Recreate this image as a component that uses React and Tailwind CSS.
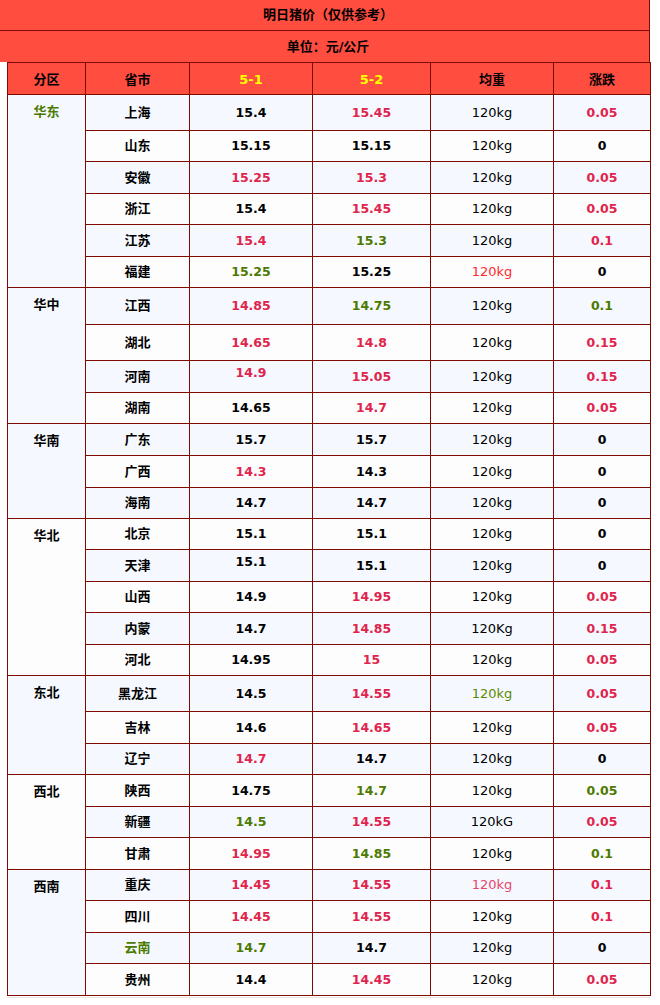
const K = 'text-black'
const R = 'text-[#e0244c]'
const G = 'text-[#4c7a00]'

const groups = [
  {
    region: '华东',
    regionColor: G,
    rows: [
      ['上海', K, '15.4', K, '15.45', R, '120kg', K, '0.05', R, 'h-[36px]'],
      ['山东', K, '15.15', K, '15.15', K, '120kg', K, '0', K, 'h-[31px]'],
      ['安徽', K, '15.25', R, '15.3', R, '120kg', K, '0.05', R, 'h-[32px]'],
      ['浙江', K, '15.4', K, '15.45', R, '120kg', K, '0.05', R, 'h-[31px]'],
      ['江苏', K, '15.4', R, '15.3', G, '120kg', K, '0.1', R, 'h-[32px]'],
      ['福建', K, '15.25', G, '15.25', K, '120kg', 'text-[#ff2a2a]', '0', K, 'h-[31px]'],
    ],
  },
  {
    region: '华中',
    regionColor: K,
    rows: [
      ['江西', K, '14.85', R, '14.75', G, '120kg', K, '0.1', G, 'h-[37px]'],
      ['湖北', K, '14.65', R, '14.8', R, '120kg', K, '0.15', R, 'h-[36px]'],
      ['河南', K, '14.9', R, '15.05', R, '120kg', K, '0.15', R, 'h-[32px]', true],
      ['湖南', K, '14.65', K, '14.7', R, '120kg', K, '0.05', R, 'h-[31px]'],
    ],
  },
  {
    region: '华南',
    regionColor: K,
    rows: [
      ['广东', K, '15.7', K, '15.7', K, '120kg', K, '0', K, 'h-[32px]'],
      ['广西', K, '14.3', R, '14.3', K, '120kg', K, '0', K, 'h-[32px]'],
      ['海南', K, '14.7', K, '14.7', K, '120kg', K, '0', K, 'h-[31px]'],
    ],
  },
  {
    region: '华北',
    regionColor: K,
    rows: [
      ['北京', K, '15.1', K, '15.1', K, '120kg', K, '0', K, 'h-[31px]'],
      ['天津', K, '15.1', K, '15.1', K, '120kg', K, '0', K, 'h-[32px]', true],
      ['山西', K, '14.9', K, '14.95', R, '120kg', K, '0.05', R, 'h-[31px]'],
      ['内蒙', K, '14.7', K, '14.85', R, '120Kg', K, '0.15', R, 'h-[32px]'],
      ['河北', K, '14.95', K, '15', R, '120kg', K, '0.05', R, 'h-[31px]'],
    ],
  },
  {
    region: '东北',
    regionColor: K,
    rows: [
      ['黑龙江', K, '14.5', K, '14.55', R, '120kg', 'text-[#5a8a00]', '0.05', R, 'h-[36px]'],
      ['吉林', K, '14.6', K, '14.65', R, '120kg', K, '0.05', R, 'h-[32px]'],
      ['辽宁', K, '14.7', R, '14.7', K, '120kg', K, '0', K, 'h-[31px]'],
    ],
  },
  {
    region: '西北',
    regionColor: K,
    rows: [
      ['陕西', K, '14.75', K, '14.7', G, '120kg', K, '0.05', G, 'h-[32px]'],
      ['新疆', K, '14.5', G, '14.55', R, '120kG', K, '0.05', R, 'h-[31px]'],
      ['甘肃', K, '14.95', R, '14.85', G, '120kg', K, '0.1', G, 'h-[32px]'],
    ],
  },
  {
    region: '西南',
    regionColor: K,
    rows: [
      ['重庆', K, '14.45', R, '14.55', R, '120kg', 'text-[#e8466a]', '0.1', R, 'h-[31px]'],
      ['四川', K, '14.45', R, '14.55', R, '120kg', K, '0.1', R, 'h-[32px]'],
      ['云南', G, '14.7', G, '14.7', K, '120kg', K, '0', K, 'h-[31px]'],
      ['贵州', K, '14.4', K, '14.45', R, '120kg', K, '0.05', R, 'h-[32px]'],
    ],
  },
]

const cell = 'border border-[#7f0a00] text-center align-middle p-0'
const num = 'font-bold text-[12.5px]'

export default function App() {
  let index = 0
  return (
    <div
      className="w-[660px] h-[1005px] bg-white text-[13px] leading-4 text-black"
      style={{ fontFamily: '"DejaVu Sans", "Noto Sans CJK SC", sans-serif' }}
    >
      <div className="w-[650px] bg-[#ff4d40] border-r border-[#7f0a00]">
        <div className="h-[31px] flex items-center justify-center font-bold border-b border-[#7f0a00] pl-[7px]">
          明日猪价（仅供参考）
        </div>
        <div className="h-[31px] flex items-center justify-center font-bold pl-[7px]">
          单位：元/公斤
        </div>
      </div>
      <div className="pl-[7px]">
        <table className="border-collapse table-fixed w-[643px]">
          <colgroup>
            <col className="w-[78px]" />
            <col className="w-[104px]" />
            <col className="w-[123px]" />
            <col className="w-[118px]" />
            <col className="w-[123px]" />
            <col className="w-[97px]" />
          </colgroup>
          <tbody>
            <tr className="h-[32px] bg-[#ff4d40] font-bold">
              <td className={`${cell} pt-[3px]`}>分区</td>
              <td className={`${cell} pt-[3px]`}>省市</td>
              <td className={`${cell} pt-[3px] text-[#ffff00]`}>5-1</td>
              <td className={`${cell} pt-[3px] text-[#ffff00]`}>5-2</td>
              <td className={`${cell} pt-[3px]`}>均重</td>
              <td className={`${cell} pt-[3px]`}>涨跌</td>
            </tr>
            {groups.map((g) =>
              g.rows.map((r, i) => {
                const [prov, pc, v1, c1, v2, c2, w, wc, ch, cc, h, raised] = r
                const bg = index % 2 === 0 ? 'bg-[#f5f9ff]' : 'bg-[#fdfdfd]'
                index += 1
                return (
                  <tr key={prov} className={`${h} ${bg}`}>
                    {i === 0 && (
                      <td rowSpan={g.rows.length} className={`${cell} !align-top pt-[9px] font-bold ${g.regionColor}`}>
                        {g.region}
                      </td>
                    )}
                    <td className={`${cell} font-bold ${pc}`}>{prov}</td>
                    <td className={`${cell} ${num} ${c1}`}>
                      <span className={raised ? 'relative -top-[4px]' : ''}>{v1}</span>
                    </td>
                    <td className={`${cell} ${num} ${c2}`}>{v2}</td>
                    <td className={`${cell} ${wc}`}>{w}</td>
                    <td className={`${cell} ${num} ${cc}`}>{ch}</td>
                  </tr>
                )
              }),
            )}
          </tbody>
        </table>
        <div className="w-[643px] h-px bg-[#e5e5e5] mt-px" />
      </div>
    </div>
  )
}
